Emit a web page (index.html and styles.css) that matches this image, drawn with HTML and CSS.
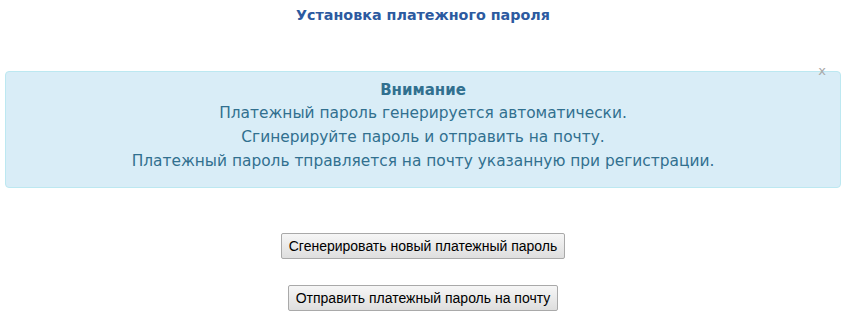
FILE: index.html
```html
<!DOCTYPE html>
<html lang="ru">
<head>
<meta charset="utf-8">
<title>Установка платежного пароля</title>
<link rel="stylesheet" href="styles.css">
</head>
<body>
<div class="page">
  <h1 class="title">Установка платежного пароля</h1>
  <div class="alert">
    <span class="close">x</span>
    <div class="alert-head">Внимание</div>
    <div class="alert-line">Платежный пароль генерируется автоматически.</div>
    <div class="alert-line">Сгинерируйте пароль и отправить на почту.</div>
    <div class="alert-line">Платежный пароль тправляется на почту указанную при регистрации.</div>
  </div>
  <div class="actions">
    <button class="btn" type="button">Сгенерировать новый платежный пароль</button>
    <button class="btn" type="button">Отправить платежный пароль на почту</button>
  </div>
</div>
</body>
</html>
```

FILE: styles.css
```css
html, body {
  margin: 0;
  padding: 0;
  background: #ffffff;
}

.page {
  display: flex;
  flex-direction: column;
  padding: 0 4px 0 5px;
  font-family: "DejaVu Sans", "Noto Sans", sans-serif;
}

.title {
  margin: 0;
  padding-top: 5px;
  height: 71px;
  box-sizing: border-box;
  text-align: center;
  font-size: 14.3px;
  font-weight: bold;
  color: #2c5aa0;
  line-height: 20px;
}

.alert {
  position: relative;
  background: #d9edf7;
  border: 1px solid #bce8f1;
  border-radius: 4px;
  color: #31708f;
  text-align: center;
  padding: 7px 0 14px;
  font-size: 15.4px;
  line-height: 24px;
}

.alert-head {
  font-weight: bold;
  font-size: 15px;
  line-height: 22px;
}

.close {
  position: absolute;
  right: 14px;
  top: -8px;
  font-size: 13px;
  line-height: 14px;
  color: #a8a8a8;
}

.actions {
  display: flex;
  flex-direction: column;
  align-items: center;
  gap: 26px;
  padding-top: 45px;
}

.btn {
  font-family: "Liberation Sans", Arial, sans-serif;
  font-size: 14px;
  line-height: 16px;
  color: #000;
  padding: 4px 7px;
  background: linear-gradient(#f6f6f6, #dedede);
  border: 1px solid #a9a9a9;
  border-radius: 2px;
}
```
